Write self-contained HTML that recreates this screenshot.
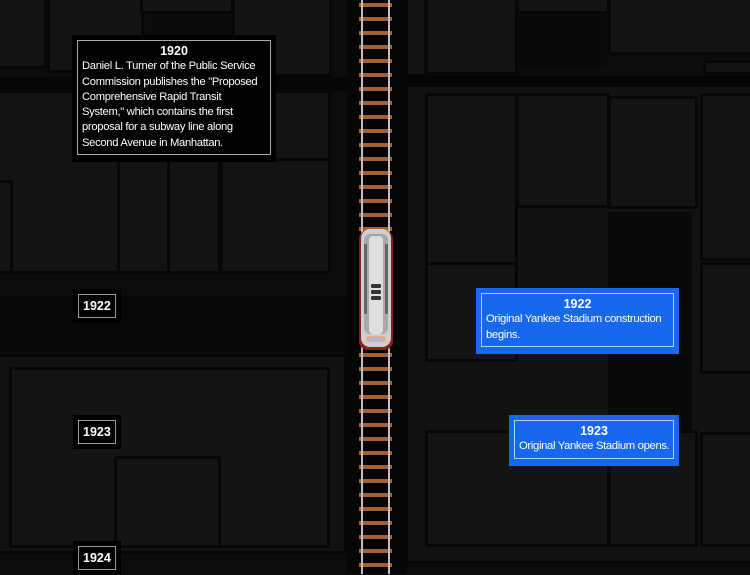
<!DOCTYPE html>
<html><head><meta charset="utf-8"><style>
*{margin:0;padding:0;box-sizing:border-box}
body{width:750px;height:574px;overflow:hidden;background:#0c0c0c;position:relative;font-family:"Liberation Sans",sans-serif}
.b{position:absolute;background:#141414;border:3px solid #070707;border-radius:2px}
.d{position:absolute;background:#0a0a0a}
.lab{position:absolute;background:#000;padding:5px}
.lab div{border:1px solid #9a9a9a;color:#fff;font-weight:bold;font-size:12.5px;padding:3px 4px;line-height:16px}
.box{position:absolute;background:#000;padding:5px}
.box .in{border:1px solid #aaa;color:#fff;font-size:11.2px;letter-spacing:-0.3px;line-height:15.3px;padding:3px 4px 2px;white-space:nowrap}
.box .y{text-align:center;font-weight:bold;font-size:12.5px;letter-spacing:0}
.blue{background:#1767ef}
.blue .in{border-color:#b9d0ff;font-size:11.3px;letter-spacing:-0.35px}
</style></head><body>
<div class="b" style="left:-3px;top:-3px;width:50px;height:72px"></div>
<div class="b" style="left:47px;top:-3px;width:97px;height:76px"></div>
<div class="b" style="left:140px;top:-3px;width:94px;height:17px"></div>
<div class="d" style="left:150px;top:15px;width:82px;height:58px"></div>
<div class="b" style="left:232px;top:-3px;width:100px;height:80px"></div>
<div class="d" style="left:0;top:77px;width:358px;height:14px;background:#060606"></div>
<div class="b" style="left:-3px;top:90px;width:334px;height:184px"></div>
<div class="b" style="left:117px;top:158px;width:53px;height:116px"></div>
<div class="b" style="left:167px;top:158px;width:54px;height:116px"></div>
<div class="b" style="left:220px;top:158px;width:111px;height:116px"></div>
<div class="b" style="left:-3px;top:180px;width:16px;height:94px"></div>
<div class="d" style="left:0;top:296px;width:358px;height:56px;background:#080808"></div>
<div class="b" style="left:-3px;top:354px;width:350px;height:200px;background:#121212"></div>
<div class="b" style="left:9px;top:367px;width:321px;height:181px"></div>
<div class="b" style="left:114px;top:456px;width:107px;height:92px"></div>
<div class="d" style="left:347px;top:0;width:11px;height:574px;background:#060606"></div>
<div class="d" style="left:393px;top:0;width:14px;height:574px;background:#060606"></div>
<div class="b" style="left:405px;top:-3px;width:22px;height:80px"></div>
<div class="b" style="left:425px;top:-3px;width:93px;height:78px"></div>
<div class="b" style="left:516px;top:-3px;width:94px;height:17px"></div>
<div class="d" style="left:519px;top:15px;width:88px;height:52px;background:#090909"></div>
<div class="b" style="left:608px;top:-3px;width:145px;height:58px"></div>
<div class="b" style="left:703px;top:60px;width:50px;height:15px"></div>
<div class="d" style="left:405px;top:76px;width:345px;height:10px;background:#040404"></div>
<div class="b" style="left:405px;top:84px;width:348px;height:480px;background:#121212"></div>
<div class="b" style="left:425px;top:93px;width:93px;height:172px"></div>
<div class="b" style="left:516px;top:93px;width:94px;height:115px"></div>
<div class="b" style="left:608px;top:96px;width:90px;height:113px"></div>
<div class="b" style="left:700px;top:93px;width:53px;height:168px"></div>
<div class="d" style="left:608px;top:212px;width:84px;height:230px;background:#090909"></div>
<div class="b" style="left:425px;top:262px;width:93px;height:100px"></div>
<div class="b" style="left:700px;top:262px;width:53px;height:112px"></div>
<div class="b" style="left:425px;top:430px;width:185px;height:117px"></div>
<div class="b" style="left:608px;top:430px;width:90px;height:117px"></div>
<div class="b" style="left:700px;top:432px;width:53px;height:115px"></div>
<div style="position:absolute;left:358px;top:0;width:35px;height:574px;background:#050505"></div>
<div style="position:absolute;left:359px;top:0;width:33px;height:574px;background:repeating-linear-gradient(to bottom,transparent 0,transparent 3px,#a65e35 3px,#a65e35 7px,transparent 7px,transparent 14px)"></div>
<div style="position:absolute;left:361px;top:0;width:2px;height:574px;background:#c0c0c0"></div>
<div style="position:absolute;left:388px;top:0;width:2px;height:574px;background:#c0c0c0"></div>
<svg style="position:absolute;left:356px;top:226px" width="40" height="130" viewBox="0 0 40 130">
<rect x="3" y="4" width="34" height="120" rx="9" fill="#8a1c1c"/>
<rect x="5" y="3" width="30" height="118" rx="9" fill="#cfcfcf"/>
<rect x="8" y="8" width="24" height="100" rx="6" fill="#a8a8a8"/>
<rect x="13" y="10" width="14" height="98" rx="4" fill="#dedede"/>
<rect x="8" y="18" width="3" height="70" fill="#666"/>
<rect x="29" y="18" width="3" height="70" fill="#666"/>
<rect x="15" y="58" width="10" height="4" rx="1" fill="#333"/>
<rect x="15" y="64" width="10" height="4" rx="1" fill="#333"/>
<rect x="15" y="70" width="10" height="4" rx="1" fill="#333"/>
<rect x="10" y="110" width="20" height="6" rx="3" fill="#e0b080"/>
<rect x="14" y="112" width="12" height="3" fill="#aab8cc"/>
</svg>
<div class="lab" style="left:73px;top:289px"><div>1922</div></div>
<div class="lab" style="left:73px;top:415px"><div>1923</div></div>
<div class="lab" style="left:73px;top:541px"><div>1924</div></div>
<div class="box" style="left:72px;top:35px;width:204px;height:127px"><div class="in" style="height:115px">
<div class="y">1920</div>Daniel L. Turner of the Public Service<br>Commission publishes the "Proposed<br>Comprehensive Rapid Transit<br>System," which contains the first<br>proposal for a subway line along<br>Second Avenue in Manhattan.</div></div>
<div class="box blue" style="left:476px;top:288px;width:203px;height:66px"><div class="in" style="height:54px">
<div class="y">1922</div>Original Yankee Stadium construction<br>begins.</div></div>
<div class="box blue" style="left:509px;top:415px;width:170px;height:51px"><div class="in" style="height:39px;padding-top:3px">
<div class="y">1923</div>Original Yankee Stadium opens.</div></div>
</body></html>
